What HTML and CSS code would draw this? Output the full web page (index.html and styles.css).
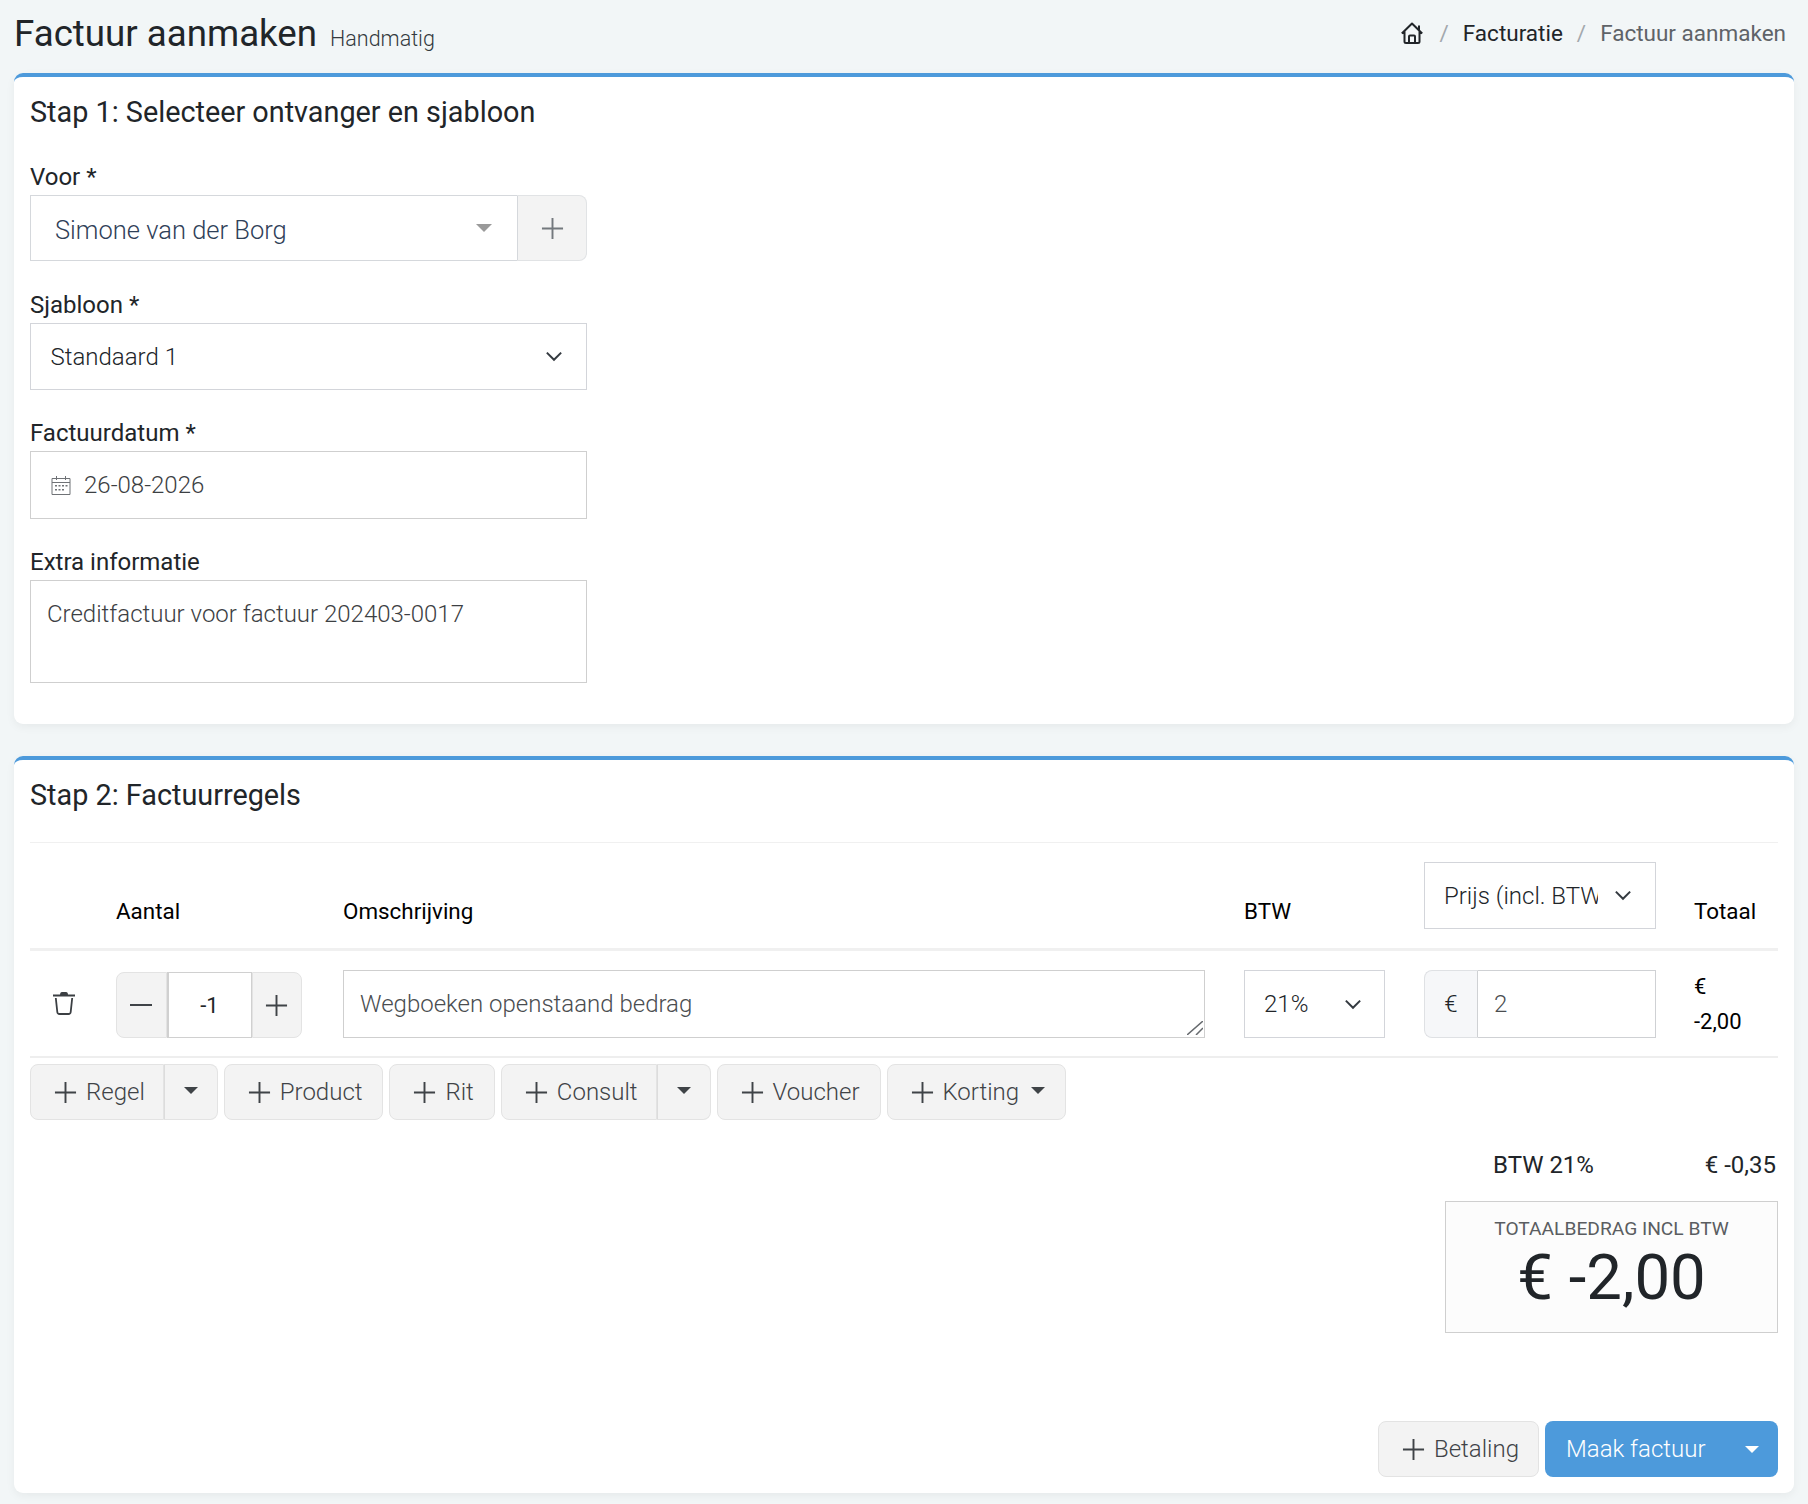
FILE: index.html

```html
<!DOCTYPE html>
<html lang="nl">
<head>
    <meta charset="UTF-8">
    <title>Factuur aanmaken</title>
    <link rel="stylesheet" href="styles.css">
</head>
<body>
    <svg class="sprites" width="0" height="0">
        <symbol id="plus" viewBox="0 0 24 24"><path d="M12 1v22M1 12h22" fill="none" stroke="currentColor" stroke-width="2"/></symbol>
        <symbol id="chev" viewBox="0 0 16 10"><path d="M1.500 1.500 8 8l6.500-6.500" fill="none" stroke="currentColor" stroke-width="1.800"/></symbol>
    </svg>

    <header class="page-head">
        <div class="page-title">
            <h1>Factuur aanmaken</h1>
            <span class="page-sub">Handmatig</span>
        </div>
        <nav class="crumbs">
            <svg class="home-icon" viewBox="0 0 22 22"><path d="M.8 11.500 11 1.500l10.200 10M18 3.500v5M3.500 9.500v10q0 1.500 1.500 1.500h12q1.500 0 1.500-1.500v-10M8 21v-6.500q0-1 1-1h4q1 0 1 1V21" fill="none" stroke="currentColor" stroke-width="2" stroke-linejoin="round"/></svg>
            <span class="crumb-sep">/</span>
            <a class="crumb">Facturatie</a>
            <span class="crumb-sep">/</span>
            <span class="crumb crumb-active">Factuur aanmaken</span>
        </nav>
    </header>

    <section class="card card-step1">
        <h2>Stap 1: Selecteer ontvanger en sjabloon</h2>

        <div class="form-group">
            <label>Voor *</label>
            <div class="picker">
                <div class="picker-value">
                    <span>Simone van der Borg</span>
                    <i class="caret caret-grey"></i>
                </div>
                <button class="picker-add"><svg class="icon-plus"><use href="#plus"/></svg></button>
            </div>
        </div>

        <div class="form-group">
            <label>Sjabloon *</label>
            <div class="select select-template">
                <span>Standaard 1</span>
                <svg class="chevron"><use href="#chev"/></svg>
            </div>
        </div>

        <div class="form-group">
            <label>Factuurdatum *</label>
            <div class="date-field">
                <svg class="cal-icon" viewBox="0 0 20 20">
                    <path d="M1 3.500h18v16H1zM1 7.500h18M5.500 1v4M14.500 1v4" fill="none" stroke="currentColor"/>
                    <path d="M4 10h2v1.500H4zM7.500 10h2v1.500h-2zM11 10h2v1.500h-2zM14.500 10h2v1.500h-2zM4 14h2v1.500H4zM7.500 14h2v1.500h-2zM11 14h2v1.500h-2z" fill="currentColor"/>
                </svg>
                <input type="text" value="26-08-2026">
            </div>
        </div>

        <div class="form-group">
            <label>Extra informatie</label>
            <textarea class="extra-info">Creditfactuur voor factuur 202403-0017</textarea>
        </div>
    </section>

    <section class="card card-step2">
        <h2>Stap 2: Factuurregels</h2>

        <div class="lines-head">
            <div></div>
            <div class="col-title">Aantal</div>
            <div class="col-title">Omschrijving</div>
            <div class="col-title">BTW</div>
            <div class="select select-price">
                <span class="clip">Prijs (incl. BTW)</span>
                <svg class="chevron"><use href="#chev"/></svg>
            </div>
            <div class="col-title">Totaal</div>
        </div>

        <div class="line">
            <button class="trash">
                <svg viewBox="0 0 22 24"><path d="M7 4q0-3 2-3h4q2 0 2 3z" fill="currentColor"/><path d="M0 4.500h22M2.800 7l1.500 14q.2 2 2.200 2h9q2 0 2.200-2L19.200 7" fill="none" stroke="currentColor" stroke-width="1.800"/></svg>
            </button>
            <div class="stepper">
                <button class="step"><svg class="icon-minus" viewBox="0 0 24 2"><path d="M1 1h22" stroke="currentColor" stroke-width="2"/></svg></button>
                <input class="qty" type="text" value="-1">
                <button class="step"><svg class="icon-plus"><use href="#plus"/></svg></button>
            </div>
            <div class="desc-wrap">
                <textarea class="desc">Wegboeken openstaand bedrag</textarea>
                <svg class="grip" viewBox="0 0 16 14"><path d="M0 14 16 0M9 14l7-7" fill="none" stroke="currentColor" stroke-width="1.500"/></svg>
            </div>
            <div class="select select-btw">
                <span>21%</span>
                <svg class="chevron"><use href="#chev"/></svg>
            </div>
            <div class="money">
                <span class="money-sign">€</span>
                <input type="text" value="2">
            </div>
            <div class="line-total">€<br>-2,00</div>
        </div>

        <div class="add-bar">
            <div class="btn-split">
                <button class="btn"><svg class="icon-plus"><use href="#plus"/></svg>Regel</button>
                <button class="btn btn-caret"><i class="caret"></i></button>
            </div>
            <button class="btn"><svg class="icon-plus"><use href="#plus"/></svg>Product</button>
            <button class="btn"><svg class="icon-plus"><use href="#plus"/></svg>Rit</button>
            <div class="btn-split">
                <button class="btn"><svg class="icon-plus"><use href="#plus"/></svg>Consult</button>
                <button class="btn btn-caret"><i class="caret"></i></button>
            </div>
            <button class="btn"><svg class="icon-plus"><use href="#plus"/></svg>Voucher</button>
            <button class="btn"><svg class="icon-plus"><use href="#plus"/></svg>Korting<i class="caret caret-inline"></i></button>
        </div>

        <div class="totals">
            <div class="vat-row">
                <span>BTW 21%</span>
                <span>€ -0,35</span>
            </div>
            <div class="total-box">
                <div class="total-label">TOTAALBEDRAG INCL BTW</div>
                <div class="total-value">€ -2,00</div>
            </div>
        </div>

        <div class="actions">
            <button class="btn"><svg class="icon-plus"><use href="#plus"/></svg>Betaling</button>
            <button class="btn-primary">Maak factuur<i class="caret caret-white"></i></button>
        </div>
    </section>
</body>
</html>
```

FILE: styles.css

```css
* {
  box-sizing: border-box;
}

body {
  margin: 0;
  padding: 0 14px;
  height: 1504px;
  overflow: hidden;
  background-color: #f2f6f7;
  color: #212529;
  font-family: Roboto, "Liberation Sans", sans-serif;
  font-size: 24px;
}

.sprites {
  position: absolute;
}

input,
textarea,
button {
  font: inherit;
}

/* page header */
.page-head {
  display: flex;
  justify-content: space-between;
  align-items: center;
  height: 73px;
  padding-bottom: 7px;
  margin-right: 8px;
}

.page-title {
  display: flex;
  align-items: baseline;
  gap: 13px;
}

h1 {
  margin: 0;
  font-size: 36.7px;
  font-weight: 400;
}

.page-sub {
  font-size: 21.5px;
  font-weight: 300;
  color: #343a40;
}

.crumbs {
  display: flex;
  align-items: center;
  gap: 14px;
  font-size: 22.5px;
}

.home-icon {
  width: 22px;
  height: 22px;
  margin-right: 3px;
}

.crumb-sep {
  color: #a3a8ad;
}

.crumb-active {
  color: #5f6368;
}

/* cards */
.card {
  background-color: #fff;
  border-top: 4px solid #4d9adb;
  border-radius: 9px;
  padding: 0 16px;
  box-shadow: 0 3px 10px rgba(0, 0, 0, 0.05);
}

.card-step1 {
  height: 651px;
  margin-bottom: 32px;
}

.card-step2 {
  height: 737px;
}

h2 {
  margin: 0;
  padding-top: 17px;
  font-size: 28.8px;
  font-weight: 400;
  line-height: 36px;
}

/* form */
.form-group {
  width: 557px;
  margin-bottom: 28px;
}

h2 + .form-group {
  margin-top: 32px;
}

label {
  display: block;
  height: 33px;
  line-height: 31px;
}

.picker {
  display: flex;
  height: 66px;
  margin-bottom: 29px;
}

.picker-value {
  flex: 1;
  display: flex;
  align-items: center;
  justify-content: space-between;
  padding: 4px 25px 0 24px;
  border: 1px solid #d5d8dc;
  border-right: 0;
  color: #2f4058;
  font-weight: 300;
  font-size: 25.5px;
}

.picker-value .caret {
  margin-top: -4px;
}

.picker-add {
  width: 70px;
  padding: 0;
  border: 1px solid #e1e3e5;
  border-left-color: #d5d8dc;
  border-radius: 0 8px 8px 0;
  background-color: #f3f3f3;
  color: #73787d;
}

.select {
  display: flex;
  align-items: center;
  justify-content: space-between;
  border: 1px solid #d3d5da;
  font-weight: 300;
  background-color: #fff;
}

.select-template {
  height: 67px;
  padding: 0 23px 0 19.500px;
  color: #212529;
}

.chevron {
  flex: none;
  width: 18px;
  height: 11px;
  color: #343a40;
}

.date-field {
  display: flex;
  align-items: center;
  height: 68px;
  padding-left: 20px;
  border: 1px solid #cfcfcf;
  color: #6f7276;
}

.date-field input {
  flex: 1;
  min-width: 0;
  margin-left: 13px;
  padding: 0;
  border: 0;
  outline: 0;
  font-weight: 300;
  color: #3c4043;
}

.cal-icon {
  width: 20px;
  height: 20px;
}

textarea {
  display: block;
  padding: 19px 16px;
  border: 1px solid #cfcfcf;
  border-radius: 0;
  outline: 0;
  resize: none;
  font-weight: 300;
  color: #3c4043;
}

.extra-info {
  width: 100%;
  height: 103px;
}

/* invoice lines */
.lines-head,
.line {
  display: grid;
  grid-template-columns: 86px 227px 901px 180px 270px 1fr;
}

.lines-head {
  align-items: end;
  height: 109px;
  margin-top: 29px;
  padding-bottom: 22px;
  border-top: 1px solid #f0f0f0;
  border-bottom: 3px solid #f0f0f0;
}

.col-title {
  line-height: 30px;
  font-size: 22.4px;
  font-weight: 400;
  color: #000;
}

.select-price {
  width: 232px;
  height: 67px;
  margin-bottom: -3px;
  padding: 0 23px 0 19px;
}

.clip {
  width: 154px;
  overflow: hidden;
  white-space: nowrap;
}

.line {
  align-items: center;
  height: 107px;
  padding-top: 19px;
  padding-bottom: 18px;
  border-bottom: 2px solid #eeeeee;
}

.trash {
  justify-self: start;
  width: 22px;
  height: 24px;
  margin: 0 0 2px 23px;
  padding: 0;
  border: 0;
  background: none;
  color: #3b3f43;
}

.trash svg {
  display: block;
  width: 22px;
  height: 24px;
}

.stepper {
  display: flex;
  width: 186px;
  height: 66px;
  margin-top: 2px;
}

.step {
  flex: 1;
  padding: 0;
  border: 1px solid #e3e3e3;
  background-color: #f3f3f3;
  color: #3f4347;
}

.step:first-child {
  border-radius: 8px 0 0 8px;
}

.step:last-child {
  border-radius: 0 8px 8px 0;
}

.icon-minus {
  display: block;
  width: 24px;
  height: 2px;
  margin: 0 auto;
}

.qty {
  width: 85px;
  padding: 0;
  border: 1px solid #d0d0d0;
  border-left-width: 2px;
  border-radius: 0;
  outline: 0;
  text-align: center;
  font-size: 22px;
  color: #212529;
}

.desc-wrap {
  position: relative;
  width: 862px;
  height: 68px;
}

.desc {
  width: 100%;
  height: 100%;
  color: #4a4d50;
}

.grip {
  position: absolute;
  right: 2px;
  bottom: 3px;
  width: 16px;
  height: 14px;
  color: #666a6e;
}

.select-btw {
  width: 141px;
  height: 68px;
  padding: 0 22px 0 19px;
}

.money {
  display: flex;
  width: 232px;
  height: 68px;
}

.money-sign {
  display: flex;
  align-items: center;
  justify-content: center;
  width: 54px;
  border: 1px solid #dfe1e4;
  border-right: 1px solid #cfd1d4;
  border-radius: 8px 0 0 8px;
  background-color: #f6f7f9;
  font-weight: 300;
}

.money input {
  flex: 1;
  min-width: 0;
  padding: 0 16px;
  border: 1px solid #cfd1d4;
  border-left: 0;
  outline: 0;
  font-weight: 300;
  color: #4a4d50;
}

.line-total {
  margin: -1px 0;
  font-size: 22px;
  line-height: 35px;
  color: #000;
}

/* buttons */
.add-bar {
  display: flex;
  gap: 6px;
  margin-top: 6px;
}

.btn-split {
  display: flex;
}

.btn {
  display: flex;
  align-items: center;
  height: 56px;
  padding: 0 20px 0 23px;
  border: 1px solid #e3e3e3;
  border-radius: 8px;
  background-color: #f3f3f3;
  color: #3f4347;
  font-weight: 300;
}

.btn-split .btn:first-child {
  padding-right: 18px;
  border-radius: 8px 0 0 8px;
}

.btn-caret {
  padding: 0 19px 4px 20px;
  border-left: 0;
  box-shadow: inset 1px 0 0 #dcdcdc;
  border-radius: 0 8px 8px 0 !important;
}

.icon-plus {
  display: block;
  flex: none;
  width: 23px;
  height: 23px;
  margin: 0 auto;
}

.btn .icon-plus {
  margin: 0 9px 0 0;
}

.caret {
  display: inline-block;
  width: 0;
  height: 0;
  border-style: solid;
  border-width: 7px 7px 0;
  border-color: #3f4347 transparent transparent;
}

.caret-grey {
  border-width: 8px 8px 0;
  border-color: #9a9a9a transparent transparent;
}

.caret-inline {
  margin: 0 0 4px 12px;
}

/* totals */
.totals {
  margin-top: 26px;
  margin-left: 1415px;
}

.vat-row {
  display: flex;
  justify-content: space-between;
  height: 37px;
  padding: 0 2px 0 48px;
  line-height: 38px;
}

.total-box {
  width: 333px;
  height: 132px;
  margin-top: 18px;
  padding-top: 13px;
  border: 1px solid #cfcfcf;
  background-color: #fcfcfc;
  text-align: center;
}

.total-label {
  font-size: 19.2px;
  line-height: 28px;
  color: #5a5d61;
}

.total-value {
  font-size: 63.5px;
  line-height: 70px;
  font-weight: 400;
}

.actions {
  display: flex;
  justify-content: flex-end;
  gap: 6px;
  margin-top: 88px;
}

.actions .btn {
  padding-right: 19px;
}

.btn-primary {
  display: flex;
  align-items: center;
  justify-content: space-between;
  width: 233px;
  height: 56px;
  padding: 0 19px 0 21px;
  border: 0;
  border-radius: 8px;
  background-color: #4d9adb;
  color: #fff;
  font-weight: 300;
}

.caret-white {
  border-color: #fff transparent transparent;
}
```
